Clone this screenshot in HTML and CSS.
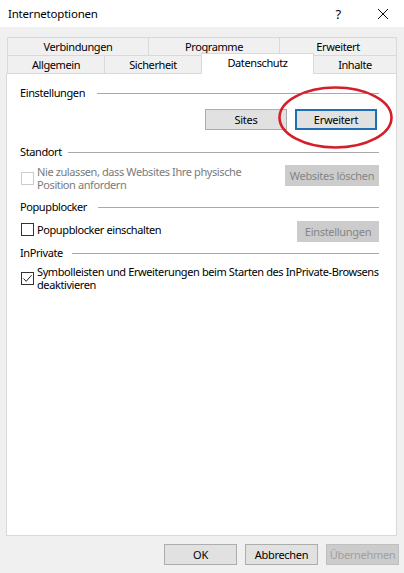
FILE: index.html
```html
<!DOCTYPE html>
<html>
<head>
<meta charset="utf-8">
	<title>Internetoptionen</title>
	<link rel="stylesheet" href="styles.css">
</head>
<body>
	<div class="titlebar">
		<span class="title">Internetoptionen</span>
		<span class="help">?</span>
		<span class="close">
			<svg width="12" height="12" viewBox="0 0 12 12"><path d="M1 1L11 11M11 1L1 11" stroke="#111" stroke-width="1" fill="none"/></svg>
		</span>
	</div>

	<div class="tabs">
		<div class="tabrow">
			<div class="tab t141">Verbindungen</div>
			<div class="tab t131">Programme</div>
			<div class="tab t118 last">Erweitert</div>
		</div>
		<div class="tabrow">
			<div class="tab t97">Allgemein</div>
			<div class="tab t97">Sicherheit</div>
			<div class="tab t113 active">Datenschutz</div>
			<div class="tab t83 last">Inhalte</div>
		</div>
	</div>

	<div class="panel">
		<!-- Einstellungen -->
		<div class="group-head"><span class="lbl w77">Einstellungen</span></div>
		<div class="btnrow first">
			<button class="btn">Sites</button>
			<button class="btn focus">Erweitert</button>
		</div>

		<!-- Standort -->
		<div class="group-head g-standort"><span class="lbl w48">Standort</span></div>
		<div class="optrow r-standort">
			<label class="opt disabled">
				<span class="box"></span>
				<span class="txt">Nie zulassen, dass Websites Ihre physische<br>Position anfordern</span>
			</label>
			<button class="btn off wide">Websites löschen</button>
		</div>

		<!-- Popupblocker -->
		<div class="group-head g-popup"><span class="lbl w78">Popupblocker</span></div>
		<div class="optrow r-popup">
			<label class="opt">
				<span class="box"></span>
				<span class="txt">Popupblocker einschalten</span>
			</label>
			<button class="btn off">Einstellungen</button>
		</div>

		<!-- InPrivate -->
		<div class="group-head g-private"><span class="lbl w52">InPrivate</span></div>
		<div class="optrow r-private">
			<label class="opt">
				<span class="box checked">
					<svg width="11" height="11" viewBox="0 0 11 11"><path d="M1.5 5.5L4.2 8.3L9.6 2.2" stroke="#222" stroke-width="1" fill="none"/></svg>
				</span>
				<span class="txt">Symbolleisten und Erweiterungen beim Starten des InPrivate-Browsens<br>deaktivieren</span>
			</label>
		</div>

		<svg class="mark" width="117" height="65" viewBox="0 0 117 65">
			<ellipse cx="58.5" cy="32.5" rx="56" ry="30" fill="none" stroke="#d41f2a" stroke-width="2.6"/>
		</svg>
	</div>

	<div class="footer">
		<button class="btn fbtn">OK</button>
		<button class="btn fbtn">Abbrechen</button>
		<button class="btn fbtn off">Übernehmen</button>
	</div>
</body>
</html>
```

FILE: styles.css
```css
body{margin: 0;width: 404px;height: 573px;overflow: hidden;background-color: #f0f0f0;font-family: "Noto Sans", "Liberation Sans", sans-serif;font-size: 11px;letter-spacing: -0.4px;color: #000;}

.titlebar{height: 27px;background-color: #fff;display: flex;align-items: center;padding-left: 8px;}
.title{flex: 1;font-size: 11.5px;line-height: 16px;letter-spacing: -0.2px;}
.help{width: 12px;text-align: center;margin-right: 33px;font-size: 13px;}
.close{width: 12px;height: 12px;margin-right: 15px;display: flex;}

.tabs{margin: 10px 0 0 7px;width: 390px;}
.tabrow{display: flex;height: 18px;align-items: flex-end;}
.tab{box-sizing: border-box;height: 18px;border-top: 1px solid #d9d9d9;border-left: 1px solid #d9d9d9;text-align: center;line-height: 17px;background-color: #f0f0f0;}
.tab.last{border-right: 1px solid #d9d9d9;}
.tab.active{height: 21px;margin-bottom: -1px;background-color: #fff;border-right: 1px solid #d9d9d9;position: relative;z-index: 1;line-height: 17px;}
.tab.active + .tab{border-left: none;}
.t141{width: 141px;}
.t131{width: 131px;}
.t118{width: 118px;}
.t97{width: 97px;}
.t113{width: 113px;}
.t83{width: 83px;}

.panel{position: relative;box-sizing: border-box;margin-left: 6px;width: 391px;height: 463px;background-color: #fff;border: 1px solid #d9d9d9;padding: 11px 17px 0 13px;}

.group-head{display: flex;align-items: center;height: 16px;line-height: 16px;}
.group-head::after{content: "";flex: 1;height: 1px;background-color: #a9a9a9;}
.lbl{white-space: nowrap;}
.w77{width: 77px;}
.w48{width: 48px;}
.w78{width: 78px;}
.w52{width: 52px;}

.btn{box-sizing: border-box;height: 21px;width: 82px;padding: 0;border: 1px solid #adadad;background-color: #e1e1e1;font-family: inherit;font-size: 11px;letter-spacing: -0.3px;color: #000;white-space: nowrap;}
.btn.focus{border: 2px solid #1f6fb8;}
.btn.off{border-color: #cccccc;background-color: #cccccc;color: #858585;}
.btn.wide{width: 94px;}

.btnrow{display: flex;justify-content: flex-end;gap: 8px;}
.btnrow.first{margin: 8px 2px 0 0;}

.g-standort{margin-top: 14px;}
.g-popup{margin-top: 8px;}
.g-private{margin-top: 3px;}

.optrow{display: flex;justify-content: space-between;align-items: flex-start;}
.r-standort{margin-top: 5px;}
.r-popup{margin-top: 6px;}
.r-popup .opt{margin-top: 2px;}
.r-private{margin-top: 4px;}

.opt{display: flex;align-items: center;gap: 3px;margin-left: 1px;}
.box{box-sizing: border-box;width: 13px;height: 13px;flex: none;border: 1px solid #333;background-color: #fff;display: flex;align-items: center;justify-content: center;}
.txt{line-height: 13px;white-space: nowrap;}
.opt.disabled{color: #7a7a7a;}
.opt.disabled .box{border-color: #cccccc;}

.mark{position: absolute;left: 270px;top: 11px;}

.footer{display: flex;justify-content: flex-end;gap: 8px;margin-top: 8px;padding-right: 5px;}
.fbtn{width: 73px;}
.fbtn.off{color: #a0a0a0;border-color: #bfbfbf;}
```
